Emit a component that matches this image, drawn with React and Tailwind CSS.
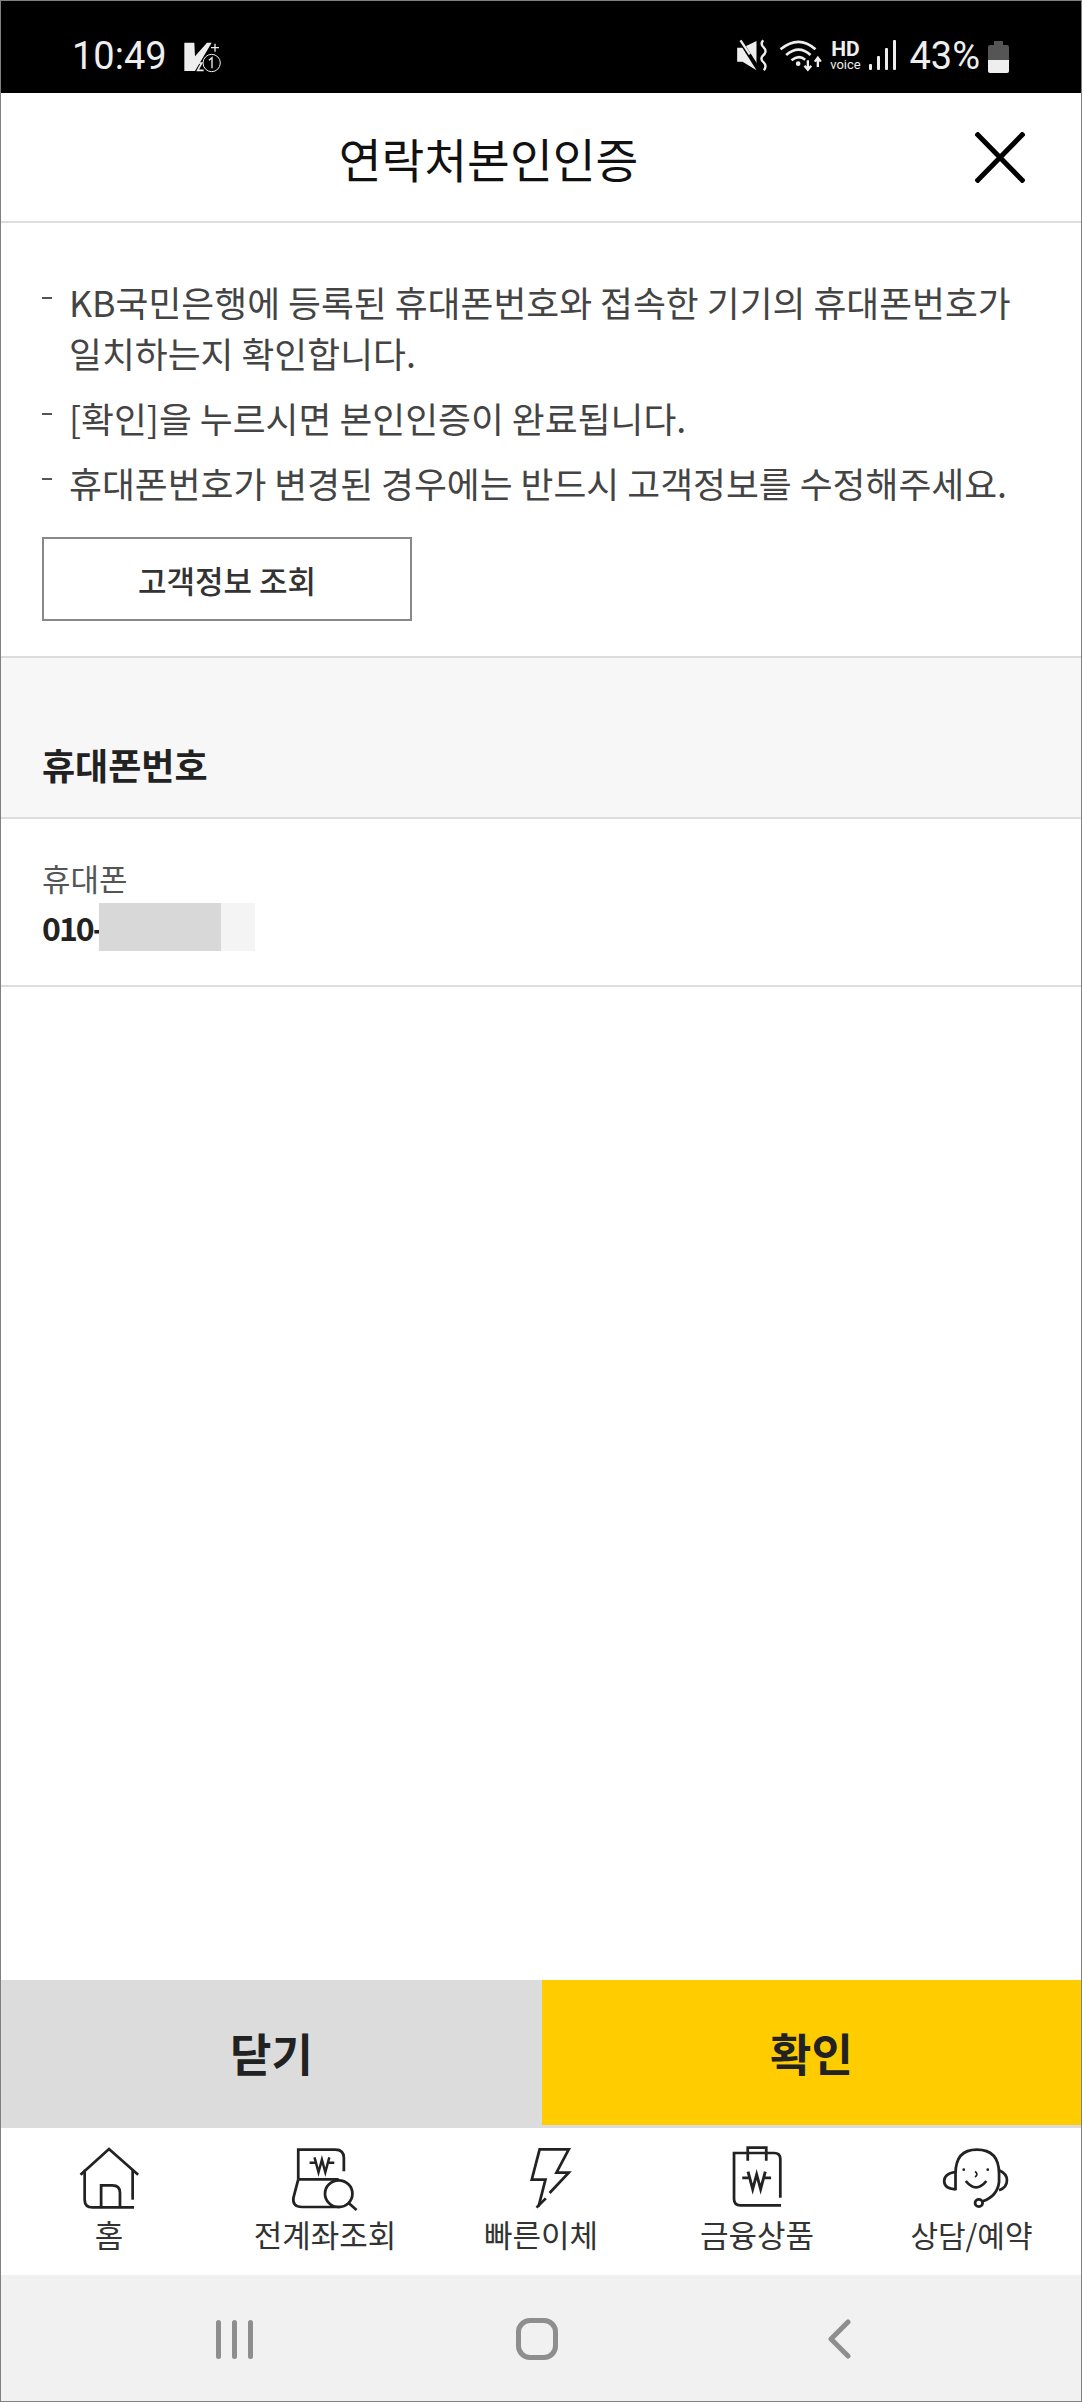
const kr = "font-['Noto_Sans_CJK_KR',sans-serif]"

function WonMark({ x, y, s = 1 }) {
  // crossbar and W, centred on x/y in zoom units
  return (
    <g transform={`translate(${x} ${y}) scale(${s})`}>
      <path d="M-40 -2H-22M22 -2H40" />
      <path d="M-24 -20L-11 30L0 -12L11 30L24 -20" />
    </g>
  )
}

function NavIcon({ box, children }) {
  return (
    <svg
      viewBox={box}
      preserveAspectRatio="none"
      className="w-[72px] h-[70px]"
      fill="none"
      stroke="#222"
      strokeWidth="8"
    >
      {children}
    </svg>
  )
}

const navItems = [
  {
    label: '홈',
    icon: (
      <NavIcon box="213 95 210 210">
        <path d="M235 193L318 116L403 193" />
        <path d="M247 178V268Q247 291 270 291H391" />
        <path d="M387 178V268" />
        <path d="M295 291V225H328Q350 225 350 247V291" />
      </NavIcon>
    ),
  },
  {
    label: '전계좌조회',
    icon: (
      <NavIcon box="840 95 210 210">
        <path d="M867 207V118H975Q1000 118 1000 143V183" />
        <WonMark x={936} y={159} s={0.9} />
        <path d="M867 207H985" />
        <path d="M867 207L853 262Q849 290 878 290H990" />
        <circle cx="985" cy="250" r="40" />
        <path d="M1014 278L1037 299" />
      </NavIcon>
    ),
  },
  {
    label: '빠른이체',
    icon: (
      <NavIcon box="12 5 210 210">
        <path d="M142 158L198 97H162L198 27H113L90 118H130L110 198" />
        <path d="M104 202L131 174" />
      </NavIcon>
    ),
  },
  {
    label: '금융상품',
    icon: (
      <NavIcon box="525 95 210 210">
        <path d="M700 285H582Q563 285 563 266V128H680Q698 128 698 146V262" />
        <path d="M603 151V112H657V151" />
        <WonMark x={629} y={205} s={1.05} />
      </NavIcon>
    ),
  },
  {
    label: '상담/예약',
    icon: (
      <NavIcon box="1144 95 210 210">
        <path d="M1198 240V190Q1198 118 1260 118Q1325 118 1325 190V215Q1320 258 1277 273" />
        <circle cx="1266" cy="278" r="11" />
        <path d="M1198 185Q1165 190 1165 212Q1165 235 1198 237" />
        <path d="M1325 180Q1348 190 1348 210Q1348 232 1325 240" />
        <circle cx="1222" cy="178" r="4" fill="#222" stroke="none" />
        <circle cx="1292" cy="178" r="4" fill="#222" stroke="none" />
        <path d="M1255 183Q1266 192 1255 200" strokeWidth="5" />
        <path d="M1228 212Q1258 250 1288 212" />
      </NavIcon>
    ),
  },
]

function StatusBar() {
  return (
    <div className="h-[92px] bg-black flex items-center pt-[18px] pl-[71px] pr-[71px] text-[#eeeeee] font-['Roboto',sans-serif]">
      <span className="text-[38px] leading-none">10:49</span>
      <svg viewBox="0 0 180 150" className="w-[60px] h-[50px] ml-[4px]" fill="none">
        <path d="M40 35H70L72 76L108 35H122L72 120H40Z" fill="#eeeeee" />
        <path d="M82 96L92 96L80 118H98" stroke="#eeeeee" strokeWidth="5" />
        <circle cx="122" cy="96" r="26" fill="#000" stroke="#eeeeee" strokeWidth="3" />
        <path d="M114 88L123 80V112" stroke="#eeeeee" strokeWidth="4" />
        <path d="M120 50H144M132 38V62" stroke="#eeeeee" strokeWidth="4" />
      </svg>
      <svg viewBox="0 0 285 150" className="w-[98px] h-[50px] ml-auto" fill="none" stroke="#eeeeee">
        <path d="M20 50H36L78 30V118L36 92H20Z" fill="#eeeeee" stroke="none" />
        <path d="M26 24L84 116" stroke="#000" strokeWidth="12" />
        <path d="M30 28L58 70" strokeWidth="7" />
        <path d="M98 28Q88 40 100 50Q112 62 96 75Q88 85 100 95Q110 105 100 118" strokeWidth="7" />
        <path d="M150 55Q205 10 255 55" strokeWidth="8" />
        <path d="M167 72Q205 40 240 72" strokeWidth="8" />
        <path d="M183 88Q205 70 224 86" strokeWidth="8" />
        <circle cx="203" cy="98" r="7" fill="#eeeeee" stroke="none" />
        <path d="M232 88V114M222 104L232 116L242 104" strokeWidth="7" />
        <path d="M262 108V82M253 92L262 80L271 92" strokeWidth="7" />
      </svg>
      <div className="flex flex-col items-center w-[36px] leading-none">
        <span className="text-[21px] font-bold leading-[17px]">HD</span>
        <span className="text-[13px] leading-[13px]">voice</span>
      </div>
      <svg viewBox="0 0 28 32" className="w-[28px] h-[32px] ml-[6px]" fill="#eeeeee">
        <rect x="0" y="24" width="3" height="6" rx="1" />
        <rect x="8" y="16" width="3" height="14" rx="1" />
        <rect x="16" y="8" width="3" height="22" rx="1" />
        <rect x="24" y="0" width="3" height="30" rx="1" />
      </svg>
      <span className="text-[38px] leading-none ml-[12px]">43%</span>
      <svg viewBox="0 0 21 33" className="w-[23px] h-[33px] ml-[7px]">
        <path d="M6 1H15V5H19Q21 5 21 7V20H0V7Q0 5 2 5H6Z" fill="#555555" />
        <path d="M0 20H21V31Q21 33 19 33H2Q0 33 0 31Z" fill="#eeeeee" />
      </svg>
    </div>
  )
}

function Notice({ children, className = '' }) {
  return (
    <li className={`flex ${className}`}>
      <span className="w-[10px] h-[2px] bg-[#555555] mt-[21px] mr-[17px] shrink-0"></span>
      <span>{children}</span>
    </li>
  )
}

export default function App() {
  return (
    <div className={`w-[1082px] h-[2402px] flex flex-col border border-[#808080] bg-white ${kr}`}>
      <StatusBar />

      <header className="h-[130px] flex items-center relative border-b-2 border-[#dddddd] shrink-0">
        <h1 className="w-full text-center text-[46.5px] font-normal text-[#111111] pr-[105px] pt-[2px] leading-none">연락처본인인증</h1>
        <svg viewBox="0 0 50 50" preserveAspectRatio="none" className="absolute right-[56px] top-[39px] w-[50px] h-[51px]" fill="none" stroke="#000" strokeWidth="5">
          <path d="M1 1L49 49M49 1L1 49" />
        </svg>
      </header>

      <section className="h-[435px] shrink-0 border-b-2 border-[#dddddd] pt-[53px] pl-[41px] text-[35.75px] leading-[51px] text-[#444444]">
        <ul>
          <Notice className="mb-[14px]">KB국민은행에 등록된 휴대폰번호와 접속한 기기의 휴대폰번호가<br />일치하는지 확인합니다.</Notice>
          <Notice className="mb-[14px]">[확인]을 누르시면 본인인증이 완료됩니다.</Notice>
          <Notice>휴대폰번호가 변경된 경우에는 반드시 고객정보를 수정해주세요.</Notice>
        </ul>
        <button className="mt-[29px] w-[370px] h-[84px] border-2 border-[#888888] flex items-center justify-center text-[31px] font-medium text-[#333333] leading-none">고객정보 조회</button>
      </section>

      <section className="h-[161px] shrink-0 bg-[#f7f7f7] border-b-2 border-[#dddddd] flex items-end pl-[41px] pb-[33px]">
        <h2 className="text-[36px] font-bold text-[#222222] leading-[40px]">휴대폰번호</h2>
      </section>

      <section className="h-[168px] shrink-0 border-b-2 border-[#dddddd] pl-[41px] pt-[41px]">
        <p className="text-[31px] leading-[36px] text-[#555555]">휴대폰</p>
        <div className="flex items-start mt-[7px]">
          <span className="w-[57px] whitespace-nowrap text-[32px] leading-[48px] font-bold tracking-[-2px] text-[#222222]">010-</span>
          <span className="relative w-[122px] h-[48px] bg-[#d8d8d8]"></span>
          <span className="w-[34px] h-[48px] bg-[#f4f4f4]"></span>
        </div>
      </section>

      <div className="flex-1"></div>

      <div className="flex h-[148px] shrink-0 text-[45px] font-bold text-[#222222] leading-none">
        <button className="w-[541px] bg-[#dcdcdc] flex items-center justify-center pb-[4px]">닫기</button>
        <div className="flex-1 bg-[#dcdcdc] pb-[3px] flex">
          <button className="flex-1 bg-[#ffcc00] flex items-center justify-center">확인</button>
        </div>
      </div>

      <nav className="h-[147px] shrink-0 grid grid-cols-5 pt-[14px] bg-white">
        {navItems.map((item, i) => (
          <div key={item.label} className="flex flex-col items-center">
            <div className="h-[70px]">{item.icon}</div>
            <span className={`leading-[36px] text-[#333333] mt-[4px] whitespace-nowrap ${i === 4 ? 'text-[30px] mr-[3px]' : 'text-[31px]'}`}>{item.label}</span>
          </div>
        ))}
      </nav>

      <div className="flex-none h-[126px] bg-[#f1f1f1] flex items-center pl-[215px] pt-[2px]">
        <div className="flex gap-[11px]">
          <span className="w-[5px] h-[39px] rounded-full bg-[#8e8e8e]"></span>
          <span className="w-[5px] h-[39px] rounded-full bg-[#8e8e8e]"></span>
          <span className="w-[5px] h-[39px] rounded-full bg-[#8e8e8e]"></span>
        </div>
        <span className="ml-[263px] w-[42px] h-[42px] rounded-[14px] border-[5px] border-[#8e8e8e]"></span>
        <svg viewBox="0 0 23 40" className="ml-[270px] w-[23px] h-[40px]" fill="none" stroke="#8e8e8e" strokeWidth="5" strokeLinecap="round" strokeLinejoin="round">
          <path d="M20 3L3 20L20 37" />
        </svg>
      </div>
    </div>
  )
}
